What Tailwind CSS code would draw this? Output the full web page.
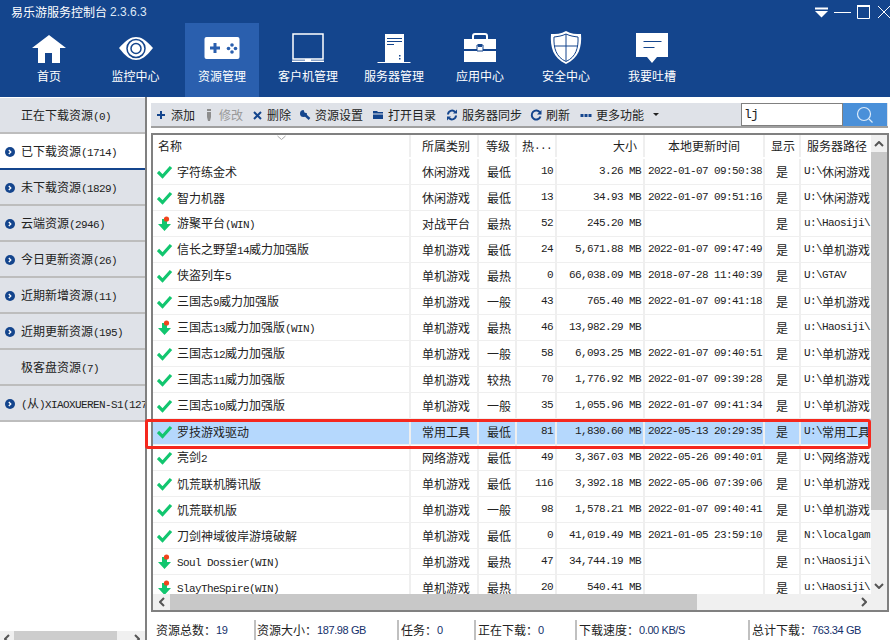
<!DOCTYPE html>
<html lang="zh-CN">
<head>
    <meta charset="UTF-8">
    <title>易乐游服务控制台</title>
    <script src="https://cdn.jsdelivr.net/npm/@tailwindcss/browser@4"></script>
</head>
<body class="w-[890px] h-[640px] overflow-hidden relative bg-white text-[12px] leading-none text-[#222] font-['Noto_Sans_CJK_SC',sans-serif]">
    <!-- header -->
    <header class="h-[97px] bg-[#14458d] text-white flex flex-col">
        <div class="h-[23px] flex items-center pl-[11px] relative">
            <span>易乐游服务控制台</span>
            <span class="ml-[3px] font-['Liberation_Sans',sans-serif] text-[#dfe8f5]">2.3.6.3</span>
            <div class="absolute right-0 top-0 h-[23px]">
                <svg width="80" height="23" viewBox="810 0 80 23" fill="none" stroke="#fff">
                    <path d="M815 8.500h13" stroke-width="2"/>
                    <path d="M815 11h13l-6.500 6.500z" fill="#fff" stroke="none"/>
                    <path d="M834 12.500h17" stroke-width="1"/>
                    <path d="M857.500 6.500h12v12h-12z" stroke-width="1"/>
                    <path d="M857 6h13" stroke-width="2"/>
                    <path d="M878 6l12 12M890 6l-12 12" stroke-width="1"/>
                </svg>
            </div>
        </div>
        <nav class="flex pl-[7px] h-[74px]">
            <div class="w-[86px] flex flex-col items-center">
                <svg class="mt-[11px] -ml-[2px]" width="34" height="30" viewBox="0 0 34 30" fill="#fff"><path d="M0 14L17 1l17 13h-1.500H28v15h-8V19h-7v10H6V14z"/></svg>
                <span class="mt-[6px] -ml-[2px]">首页</span>
            </div>
            <div class="w-[86px] flex flex-col items-center">
                <svg class="mt-[11px] -ml-[1px]" width="36" height="30" viewBox="0 0 36 30"><path d="M1 14C8 6 13 3 18 3s10 3 17 11c-7 9-12 12-17 12S8 23 1 14z" fill="#fff"/><circle cx="18" cy="14.500" r="9" fill="none" stroke="#14458d" stroke-width="1.500"/><circle cx="18" cy="14.500" r="5" fill="none" stroke="#14458d" stroke-width="1.500"/></svg>
                <span class="mt-[6px] -ml-[1px]">监控中心</span>
            </div>
            <div class="w-[86px] flex justify-center">
                <div class="w-[74px] h-[74px] bg-[#2a5fae] flex flex-col items-center">
                    <svg class="mt-[11px]" width="36" height="30" viewBox="0 0 36 30"><rect x="0.500" y="3" width="35" height="22" rx="2" fill="#fff"/><path d="M6 12.500h3.500V9h3v3.500H16v3h-3.500V19h-3v-3.500H6z" fill="#2a5fae"/><circle cx="28" cy="11" r="1.800" fill="#2a5fae"/><circle cx="28" cy="18" r="1.800" fill="#2a5fae"/><circle cx="24.500" cy="14.500" r="1.800" fill="#2a5fae"/><circle cx="31.500" cy="14.500" r="1.800" fill="#2a5fae"/></svg>
                    <span class="mt-[6px]">资源管理</span>
                </div>
            </div>
            <div class="w-[86px] flex flex-col items-center">
                <svg class="mt-[9px]" width="34" height="32" viewBox="0 0 34 32"><path d="M2 2h30v25H2z" fill="none" stroke="#fff" stroke-width="1.500"/><path d="M1 28.500h32V30H1zM14 27h6v2h-6z" fill="#fff"/></svg>
                <span class="mt-[6px]">客户机管理</span>
            </div>
            <div class="w-[86px] flex flex-col items-center">
                <svg class="mt-[9px]" width="34" height="32" viewBox="0 0 34 32"><path d="M8 2h19v28H8z" fill="#fff"/><path d="M0.500 30.500h33" stroke="#fff"/><path d="M10 6.500h15M10 9.500h15M10 12.500h7" stroke="#14458d"/><path d="M22 23h1.500v1.500H22zM22 26h1.500v1.500H22z" fill="#14458d"/></svg>
                <span class="mt-[6px]">服务器管理</span>
            </div>
            <div class="w-[86px] flex flex-col items-center">
                <svg class="mt-[9px]" width="34" height="32" viewBox="0 0 34 32"><path d="M10 7V4q0-2 2-2h10q2 0 2 2v3" fill="none" stroke="#fff" stroke-width="2"/><path d="M1 7h32v10H1zM1 19h32v11H1z" fill="#fff"/><path d="M14 13h6v6h-6z" fill="#fff" stroke="#14458d"/><path d="M15 12h4v3h-4z" fill="#14458d"/></svg>
                <span class="mt-[6px]">应用中心</span>
            </div>
            <div class="w-[86px] flex flex-col items-center">
                <svg class="mt-[7px]" width="34" height="34" viewBox="0 0 34 34"><path d="M17 1c5 3 10 3 15 3 1 13-2 24-15 30C4 28 1 17 2 4c5 0 10 0 15-3z" fill="#fff"/><path d="M17 4c4 2 8 2.500 12 3 .5 11-2 20-12 24.500C7 27 4.500 18 5 7c4-.5 8-1 12-3z" fill="#fff" stroke="#14458d" stroke-width="1"/><path d="M17 4v27M5 16h24" stroke="#14458d" stroke-width="1"/></svg>
                <span class="mt-[6px]">安全中心</span>
            </div>
            <div class="w-[86px] flex flex-col items-center">
                <svg class="mt-[9px]" width="34" height="32" viewBox="0 0 34 32"><path d="M1 1h32v24H22l-5 6-5-6H1z" fill="#fff"/><path d="M8.500 9.500h18M8.500 15.500h11" stroke="#14458d"/></svg>
                <span class="mt-[6px]">我要吐槽</span>
            </div>
        </nav>
    </header>

    <div class="flex h-[543px]">
        <!-- sidebar -->
        <aside class="w-[147px] border-r-2 border-[#808080] flex flex-col justify-between shrink-0">
            <ul id="side" class="pt-[1px]"></ul>
            <div class="h-[9px] bg-[#f0f0f0] flex items-start overflow-hidden">
                <div class="w-[14px] flex justify-center pt-[3px] shrink-0"><svg width="6" height="10" viewBox="0 0 6 10" fill="none" stroke="#555" stroke-width="2"><path d="M5 1L1 5l4 4"/></svg></div>
                <div class="w-[103px] h-[9px] bg-[#cdcdcd] shrink-0"></div>
                <div class="flex-1 flex justify-end pr-[5px] pt-[3px]"><svg width="6" height="10" viewBox="0 0 6 10" fill="none" stroke="#555" stroke-width="2"><path d="M1 1l4 4-4 4"/></svg></div>
            </div>
        </aside>

        <!-- main -->
        <main class="flex-1 min-w-0 pl-[4px] pt-[6px] flex flex-col">
            <div class="w-[737px] h-[25px] bg-[#dfe2e8] border-b-2 border-[#a0a0a0] pl-[3px] flex items-center gap-[7px]">
                <div class="flex items-center gap-[3px]"><svg width="14" height="14" viewBox="0 0 14 14"><path d="M3 7h8M7 3v8" stroke="#14458d" stroke-width="2"/></svg><span>添加</span></div>
                <div class="flex items-center gap-[3px] text-[#999]"><svg width="14" height="14" viewBox="0 0 14 14"><path d="M5 1h4v2H5zM5 4h4v5l-1 4H6L5 9z" fill="#8d8d8d"/></svg><span>修改</span></div>
                <div class="flex items-center gap-[3px]"><svg width="14" height="14" viewBox="0 0 14 14"><path d="M4 4l7 7M11 4l-7 7" stroke="#14458d" stroke-width="2"/></svg><span>删除</span></div>
                <div class="flex items-center gap-[3px]"><svg width="14" height="14" viewBox="0 0 14 14"><circle cx="5.500" cy="5.500" r="3.500" fill="#14458d"/><path d="M6 6l5.500 5" stroke="#14458d" stroke-width="2.500"/><path d="M5.500 1.500l1 3 3 1 1.500-3-2-2z" fill="#dfe2e8"/></svg><span>资源设置</span></div>
                <div class="flex items-center gap-[3px] ml-[1px]"><svg width="14" height="14" viewBox="0 0 14 14"><path d="M2 3h4l1 1h5v1.500H2zM2 6.500h10V11H2z" fill="#14458d"/></svg><span>打开目录</span></div>
                <div class="flex items-center gap-[3px] ml-[2px]"><svg width="14" height="14" viewBox="0 0 14 14" fill="none" stroke="#14458d" stroke-width="2"><path d="M3 6.500a4 4 0 0 1 7-2.500M11 7.500a4 4 0 0 1-7 2.500"/><path d="M12 1.500v4H8zM2 12.500v-4h4z" fill="#14458d" stroke="none"/></svg><span>服务器同步</span></div>
                <div class="flex items-center gap-[3px]"><svg width="14" height="14" viewBox="0 0 14 14" fill="none"><path d="M11 4.500a4.500 4.500 0 1 0 .5 4" stroke="#14458d" stroke-width="2"/><path d="M12.500 2v4.500H8z" fill="#14458d"/></svg><span>刷新</span></div>
                <div class="flex items-center gap-[3px] ml-[2px]"><svg width="14" height="14" viewBox="0 0 14 14" fill="#14458d"><path d="M1.500 6h3v3h-3zM5.500 6h3v3h-3zM9.500 6h3v3h-3z"/></svg><span>更多功能</span></div>
                <svg class="ml-[2px]" width="6" height="4" viewBox="0 0 6 4" fill="#222"><path d="M0 0h6L3 3z"/></svg>
                <div class="ml-auto h-[23px] flex">
                    <div class="w-[102px] border border-[#808080] bg-white pl-[2px] flex items-center font-['Liberation_Mono',monospace] text-[13px] tracking-[-0.8px]">lj</div>
                    <div class="w-[44px] mr-[1px] bg-[#4a90d9] flex items-center justify-center"><svg width="18" height="18" viewBox="0 0 18 18" fill="none" stroke="#dcebfa" stroke-width="1.200"><circle cx="8" cy="8" r="6.500"/><path d="M13 13l3.500 3.500"/></svg></div>
                </div>
            </div>

            <div class="mt-[5px] w-[738px] h-[480px] border-2 border-[#808080] relative overflow-hidden">
                <div class="h-[460px] overflow-hidden">
                    <div id="table"></div>
                </div>
                <svg class="absolute left-[123px] top-[0px]" width="12" height="6" viewBox="0 0 12 6" fill="none" stroke="#a8a8a8"><path d="M1.500 1l4 3.500 4-3.500"/></svg>
                <!-- vertical scrollbar -->
                <div class="absolute right-0 top-0 w-[16px] h-full bg-[#f0f0f0] flex flex-col">
                    <div class="h-[17px] flex items-center justify-center shrink-0"><svg width="10" height="6" viewBox="0 0 10 6" fill="none" stroke="#555" stroke-width="2"><path d="M1 5l4-4 4 4"/></svg></div>
                    <div class="h-[358px] bg-[#c8c8c8] shrink-0"></div>
                    <div class="flex-1"></div>
                    <div class="h-[17px] mb-[16px] flex items-center justify-center shrink-0"><svg width="10" height="6" viewBox="0 0 10 6" fill="none" stroke="#555" stroke-width="2"><path d="M1 1l4 4 4-4"/></svg></div>
                </div>
                <!-- horizontal scrollbar -->
                <div class="absolute left-0 bottom-0 w-[720px] h-[16px] bg-[#f0f0f0] flex">
                    <div class="w-[17px] flex items-center justify-center shrink-0"><svg width="6" height="10" viewBox="0 0 6 10" fill="none" stroke="#555" stroke-width="2"><path d="M5 1L1 5l4 4"/></svg></div>
                    <div class="w-[527px] bg-[#c8c8c8] shrink-0"></div>
                    <div class="flex-1 flex items-center justify-end pr-[6px]"><svg width="6" height="10" viewBox="0 0 6 10" fill="none" stroke="#555" stroke-width="2"><path d="M1 1l4 4-4 4"/></svg></div>
                </div>
            </div>

            <footer class="h-[20px] mt-[8px] flex items-center">
                <div class="w-[103px] pl-[5px] flex items-center h-full">资源总数：<span class="font-['Liberation_Sans',sans-serif] text-[11px] tracking-[-0.4px] text-[#14306a]">19</span></div>
                <div class="w-[143px] pl-[1px] border-l-2 border-[#c0c0c0] flex items-center h-full">资源大小：<span class="font-['Liberation_Sans',sans-serif] text-[11px] tracking-[-0.4px] text-[#14306a]">187.98 GB</span></div>
                <div class="w-[77px] pl-[2px] border-l-2 border-[#c0c0c0] flex items-center h-full">任务：<span class="font-['Liberation_Sans',sans-serif] text-[11px] tracking-[-0.4px] text-[#14306a]">0</span></div>
                <div class="w-[101px] pl-[2px] border-l-2 border-[#c0c0c0] flex items-center h-full">正在下载：<span class="font-['Liberation_Sans',sans-serif] text-[11px] tracking-[-0.4px] text-[#14306a]">0</span></div>
                <div class="w-[173px] pl-[2px] border-l-2 border-[#c0c0c0] flex items-center h-full">下载速度：<span class="font-['Liberation_Sans',sans-serif] text-[11px] tracking-[-0.4px] text-[#14306a]">0.00 KB/S</span></div>
                <div class="flex-1 pl-[2px] border-l-2 border-[#c0c0c0] flex items-center h-full">总计下载：<span class="font-['Liberation_Sans',sans-serif] text-[11px] tracking-[-0.4px] text-[#14306a]">763.34 GB</span></div>
            </footer>
        </main>
    </div>

    <!-- red mark drawn on the screenshot -->
    <div class="absolute left-[145px] top-[419px] w-[726px] h-[30px] border-[3px] border-[#f5281e] rounded-[3px]"></div>

    <script>
        const mono = s => s.replace(/[\x20-\x7e]+/g, m => `<span class="font-['Liberation_Mono',monospace] text-[11px] tracking-[-0.6px]">${m}</span>`);

        const side = [
            ['正在下载资源(0)', 0], ['已下载资源(1714)', 1, 'on'], ['未下载资源(1829)', 1], ['云端资源(2946)', 1],
            ['今日更新资源(26)', 1], ['近期新增资源(11)', 1], ['近期更新资源(195)', 1], ['极客盘资源(7)', 0], ['(从)XIAOXUEREN-S1(127)', 1]
        ];
        document.getElementById('side').innerHTML = side.map(([t, dot, on]) => `
            <li class="h-[36px] pl-[5px] pt-[2px] flex items-center whitespace-nowrap overflow-hidden border-b-2 ${on ? 'bg-white border-[#14458d]' : 'bg-[#dfe2e8] border-[#bdbdbd]'}">
                <span class="w-[16px] shrink-0">${dot ? '<svg width="10" height="10" viewBox="0 0 10 10"><circle cx="5" cy="5" r="5" fill="#14458d"/><path d="M3.800 3l2 2-2 2" fill="none" stroke="#fff" stroke-width="1.300"/></svg>' : ''}</span>
                <span>${mono(t)}</span>
            </li>`).join('');

        const rows = [
            ['字符练金术', '休闲游戏', '最低', '10', '3.26 MB', '2022-01-07 09:50:38', 'U:\\休闲游戏'],
            ['智力机器', '休闲游戏', '最低', '13', '34.93 MB', '2022-01-07 09:51:16', 'U:\\休闲游戏'],
            ['游聚平台(WIN)', '对战平台', '最热', '52', '245.20 MB', '', 'u:\\Haosiji\\', 1],
            ['信长之野望14威力加强版', '单机游戏', '最低', '24', '5,671.88 MB', '2022-01-07 09:47:49', 'U:\\单机游戏'],
            ['侠盗列车5', '单机游戏', '最热', '0', '66,038.09 MB', '2018-07-28 11:40:39', 'U:\\GTAV'],
            ['三国志9威力加强版', '单机游戏', '一般', '43', '765.40 MB', '2022-01-07 09:41:18', 'U:\\单机游戏'],
            ['三国志13威力加强版(WIN)', '单机游戏', '最热', '46', '13,982.29 MB', '', 'u:\\Haosiji\\', 1],
            ['三国志12威力加强版', '单机游戏', '一般', '58', '6,093.25 MB', '2022-01-07 09:40:51', 'U:\\单机游戏'],
            ['三国志11威力加强版', '单机游戏', '较热', '70', '1,776.92 MB', '2022-01-07 09:39:28', 'U:\\单机游戏'],
            ['三国志10威力加强版', '单机游戏', '一般', '35', '1,055.96 MB', '2022-01-07 09:41:34', 'U:\\单机游戏'],
            ['罗技游戏驱动', '常用工具', '最低', '81', '1,830.60 MB', '2022-05-13 20:29:35', 'U:\\常用工具'],
            ['亮剑2', '网络游戏', '最低', '49', '3,367.03 MB', '2022-05-26 09:40:01', 'U:\\网络游戏'],
            ['饥荒联机腾讯版', '单机游戏', '最低', '116', '3,392.18 MB', '2022-05-06 07:39:06', 'U:\\单机游戏'],
            ['饥荒联机版', '单机游戏', '一般', '98', '1,578.21 MB', '2022-01-07 09:40:41', 'U:\\单机游戏'],
            ['刀剑神域彼岸游境破解', '单机游戏', '最低', '0', '41,019.49 MB', '2021-01-05 23:59:10', 'N:\\localgam'],
            ['Soul Dossier(WIN)', '单机游戏', '最热', '47', '34,744.19 MB', '', 'n:\\Haosiji\\', 1],
            ['SlayTheSpire(WIN)', '单机游戏', '最热', '20', '540.41 MB', '', 'u:\\Haosiji\\', 1]
        ];
        const check = '<svg width="16" height="14" viewBox="0 0 16 14"><path d="M1 7l4.500 4.500L14 2" fill="none" stroke="#12c66f" stroke-width="3.200"/></svg>';
        const down = '<svg width="16" height="16" viewBox="0 0 16 16"><path d="M5 3h5v5h4l-6.500 7L1 8h4z" fill="#12c66f"/><circle cx="9.500" cy="3" r="2.600" fill="#f0441c"/></svg>';

        const head = `<div class="grid grid-cols-[258px_68px_38px_40px_88px_120px_36px_71px] h-[24px] items-center pb-[2px]">
            <div class="pl-[5px] h-full flex items-center border-r-2 border-[#efefef]">名称</div>
            <div class="pl-[11px] h-full flex items-center border-r-2 border-[#efefef]">所属类别</div>
            <div class="pl-[7px] h-full flex items-center border-r-2 border-[#efefef]">等级</div>
            <div class="pl-[5px] h-full flex items-center border-r-2 border-[#efefef] whitespace-nowrap">热${mono('...')}</div>
            <div class="pr-[6px] h-full flex items-center justify-end border-r-2 border-[#efefef]">大小</div>
            <div class="h-full flex items-center justify-center border-r-2 border-[#efefef]">本地更新时间</div>
            <div class="pl-[6px] h-full flex items-center border-r-2 border-[#efefef]">显示</div>
            <div class="pl-[6px] h-full flex items-center whitespace-nowrap overflow-hidden">服务器路径</div>
        </div>`;

        document.getElementById('table').innerHTML = head + rows.map((r, i) => `
            <div class="grid grid-cols-[258px_68px_38px_40px_88px_120px_36px_71px] h-[26px] items-center border-b border-[#efefef] ${i === 10 ? 'bg-[#b5d8fd]' : ''}">
                <div class="pl-[4px] h-full flex items-center gap-[4px] border-r-2 border-[#efefef] whitespace-nowrap"><span class="w-[16px] flex justify-center shrink-0">${r[7] ? down : check}</span><span>${mono(r[0])}</span></div>
                <div class="pl-[11px] h-full flex items-center border-r-2 border-[#efefef]">${r[1]}</div>
                <div class="pl-[8px] h-full flex items-center border-r-2 border-[#efefef]">${r[2]}</div>
                <div class="pr-[2px] h-full flex items-center justify-end border-r-2 border-[#efefef]">${mono(r[3])}</div>
                <div class="pr-[2px] h-full flex items-center justify-end border-r-2 border-[#efefef]">${mono(r[4])}</div>
                <div class="pl-[3px] h-full flex items-center border-r-2 border-[#efefef] whitespace-nowrap overflow-hidden">${mono(r[5])}</div>
                <div class="h-full flex items-center justify-center border-r-2 border-[#efefef]">是</div>
                <div class="pl-[3px] pr-[2px] h-full flex items-center whitespace-nowrap overflow-hidden">${mono(r[6])}</div>
            </div>`).join('');
    </script>
</body>
</html>
